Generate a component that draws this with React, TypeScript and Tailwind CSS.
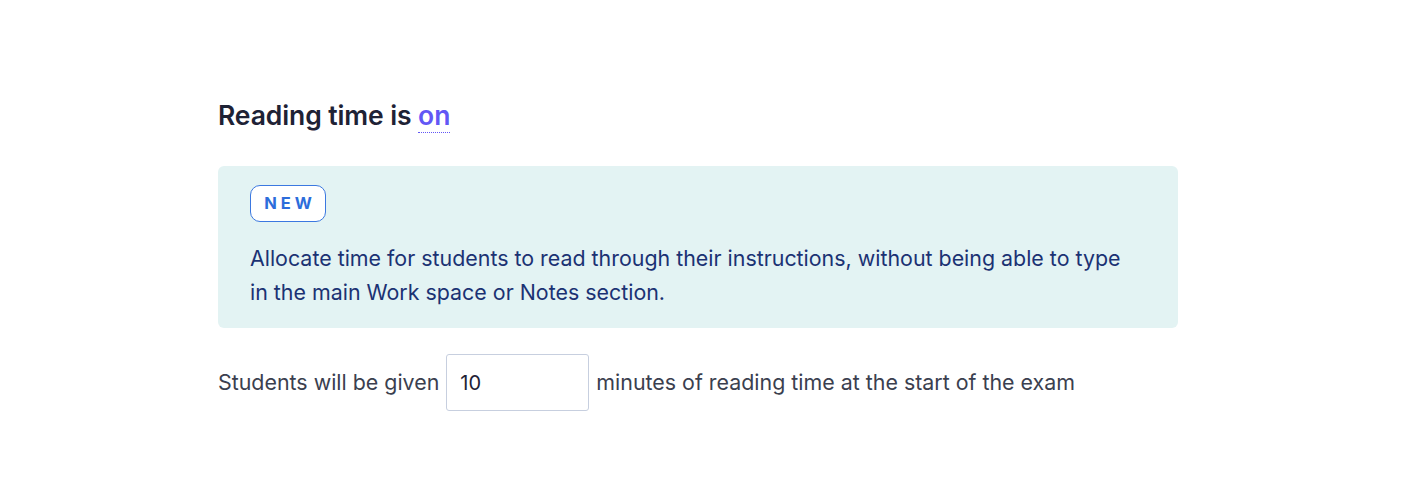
export default function App() {
  return (
    <div className="w-[1416px] h-[492px] bg-white" style={{ fontFamily: "Inter, 'Noto Sans', sans-serif" }}>
      <div className="pl-[218px] pt-[98px] w-[1178px]">
        <h2 className="text-[26.5px] leading-[34px] font-semibold text-[#1e2235] tracking-[-0.1px]">
          Reading time is{" "}
          <span className="text-[#6257f5] border-b border-dotted border-[#6257f5] pb-[1px]">on</span>
        </h2>
        <div className="mt-[34px] bg-[#e3f3f3] rounded-[6px] pl-[32px] pr-[50px] pt-[19px] pb-[19px]">
          <span className="inline-flex items-center justify-center w-[76px] h-[37px] rounded-[10px] border border-[#3b78e0] bg-white text-[#2c6ddb] text-[16.5px] font-bold tracking-[4px] pl-[4px]">
            NEW
          </span>
          <p className="mt-[19px] text-[#1b3273] text-[21.4px] leading-[34px]">
            Allocate time for students to read through their instructions, without being able to type in the main Work space or Notes section.
          </p>
        </div>
        <div className="mt-[26px] flex items-center text-[21.4px] text-[#3b3f4f]">
          <span>Students will be given</span>
          <div className="mx-[7px] w-[143px] h-[57px] border border-[#c7cfdf] rounded-[3px] flex items-center pl-[13px] text-[#1e2235] text-[20px]">10</div>
          <span>minutes of reading time at the start of the exam</span>
        </div>
      </div>
    </div>
  );
}
